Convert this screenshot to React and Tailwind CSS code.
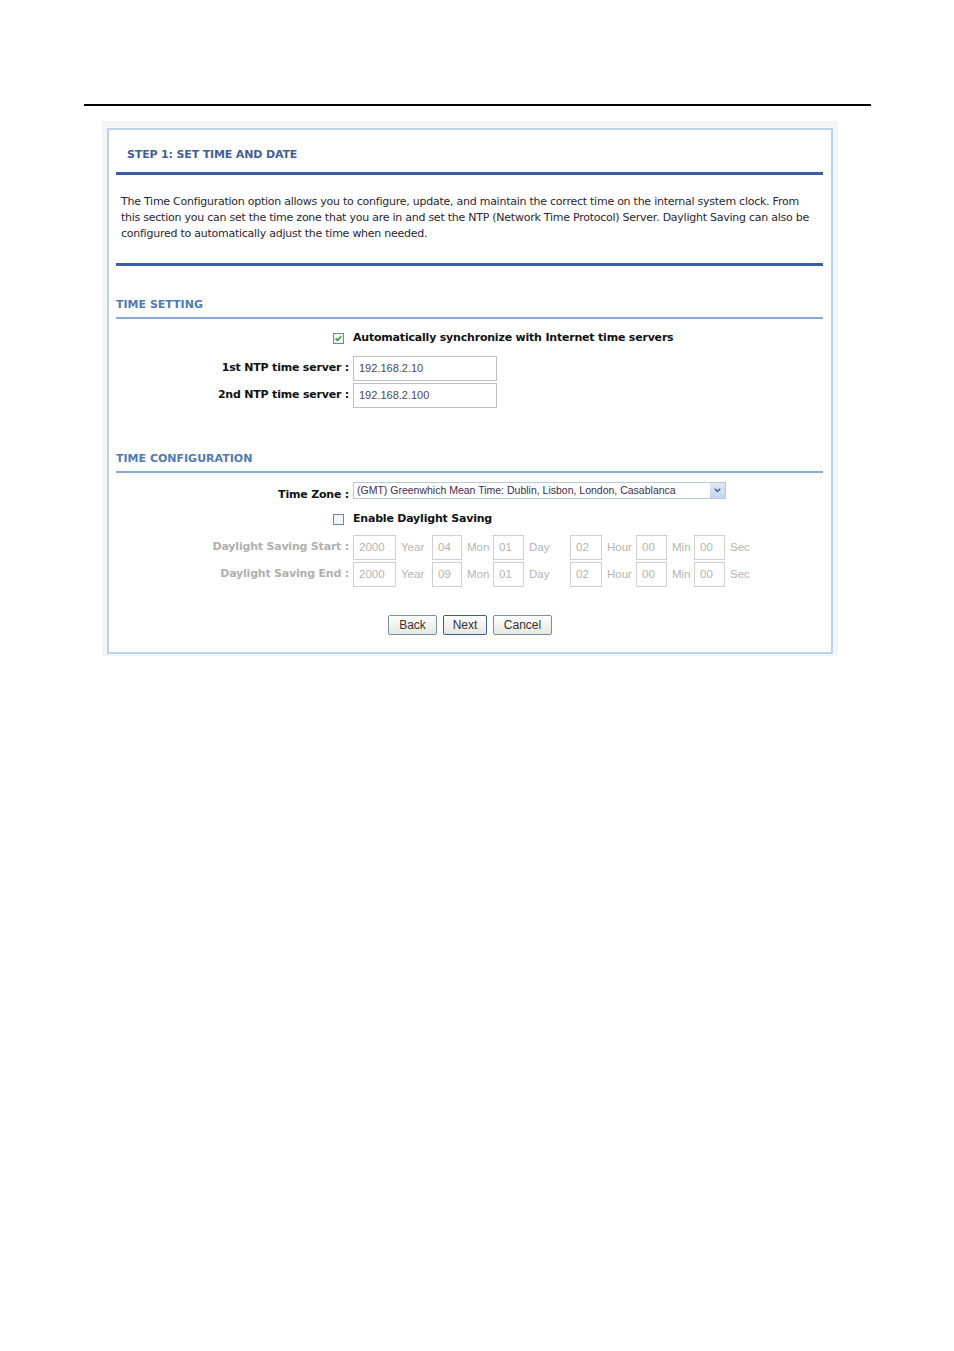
import React from "react";

const tahoma = { fontFamily: '"DejaVu Sans", Verdana, sans-serif' };

function CheckBox({ checked }) {
  return (
    <svg width="11" height="11" viewBox="0 0 11 11" className="shrink-0">
      <rect x="0.5" y="0.5" width="10" height="10" fill="#f4f6f9" stroke="#6b86ad" />
      {checked && <path d="M2.6 5.4 L4.5 7.4 L8.4 3.2" fill="none" stroke="#2e9b3a" strokeWidth="1.6" />}
    </svg>
  );
}

function DInput({ value, w }) {
  return (
    <div
      className="h-[25px] border border-[#cfcfcf] bg-white flex items-center pl-[5px] text-[11.5px] text-[#b4b4b4] font-['Liberation_Sans',Arial,sans-serif]"
      style={{ width: w }}
    >
      {value}
    </div>
  );
}

function DUnit({ children, w }) {
  return (
    <div className="text-[11.5px] text-[#b4b4b4] font-['Liberation_Sans',Arial,sans-serif] pl-[5px]" style={{ width: w }}>
      {children}
    </div>
  );
}

function DSTRow({ label, mon }) {
  return (
    <div className="flex items-center h-[25px]">
      <div className="w-[244px] text-right pr-[4px] text-[11px] font-bold text-[#b0b0b0] tracking-[-0.2px]" style={tahoma}>
        {label}
      </div>
      <DInput value="2000" w={43} />
      <DUnit w={36}>Year</DUnit>
      <DInput value={mon} w={30} />
      <DUnit w={31}>Mon</DUnit>
      <DInput value="01" w={31} />
      <DUnit w={46}>Day</DUnit>
      <DInput value="02" w={32} />
      <DUnit w={34}>Hour</DUnit>
      <DInput value="00" w={31} />
      <DUnit w={27}>Min</DUnit>
      <DInput value="00" w={31} />
      <DUnit w={30}>Sec</DUnit>
    </div>
  );
}

function Btn({ children, w, focus }) {
  return (
    <div
      className={`h-[20px] flex items-center justify-center rounded-[2px] border bg-gradient-to-b from-[#ffffff] to-[#e6e6e0] text-[12px] text-[#333] font-['Liberation_Sans',Arial,sans-serif] ${focus ? "border-[#3a5c9c]" : "border-[#7b8ea9]"}`}
      style={{ width: w }}
    >
      {children}
    </div>
  );
}

export default function App() {
  return (
    <div className="w-[954px] h-[1351px] bg-white relative overflow-hidden">
      <div className="pt-[104px] pl-[84px]">
        <div className="w-[787px] h-[2px] bg-black" />
      </div>
      <div className="ml-[102px] mt-[15px] w-[736px] h-[535px] bg-[#f5f5f5] pl-[5px] pt-[7px]">
        <div className="w-[726px] h-[526px] border-2 border-[#bcd1ea] bg-white" style={tahoma}>
          {/* Title */}
          <div className="pl-[18px] pt-[18px] h-[34px] text-[11px] font-bold text-[#3f5f9c] leading-[14px] tracking-[-0.15px]">
            STEP 1: SET TIME AND DATE
          </div>
          <div className="ml-[7px] mt-[8px] w-[707px] h-[3px] bg-[#3a5da6]" />
          <div className="pl-[12px] pt-[19px] text-[11px] leading-[16px] text-[#2b2535] tracking-[-0.25px] whitespace-nowrap">
            The Time Configuration option allows you to configure, update, and maintain the correct time on the internal system clock. From
            <br />
            this section you can set the time zone that you are in and set the NTP (Network Time Protocol) Server. Daylight Saving can also be
            <br />
            configured to automatically adjust the time when needed.
          </div>
          <div className="ml-[7px] mt-[21px] w-[707px] h-[3px] bg-[#3a5da6]" />

          {/* TIME SETTING */}
          <div className="pl-[7px] mt-[32px] text-[11px] font-bold text-[#4f7ab6] leading-[14px]">TIME SETTING</div>
          <div className="ml-[7px] mt-[5px] w-[707px] h-[2px] bg-[#8aaad6]" />

          <div className="flex items-center mt-[12px] h-[14px]">
            <div className="w-[224px]" />
            <CheckBox checked />
            <div className="pl-[9px] text-[11px] font-bold text-[#111] tracking-[-0.2px]">Automatically synchronize with Internet time servers</div>
          </div>

          <div className="flex items-center mt-[11px] h-[25px]">
            <div className="w-[244px] text-right pr-[4px] text-[11px] font-bold text-[#111] tracking-[-0.2px]">1st NTP time server :</div>
            <div className="w-[144px] h-[25px] border border-[#c0c0c0] flex items-center pl-[5px] text-[11px] text-[#4e4560] font-['Liberation_Sans',Arial,sans-serif]">
              192.168.2.10
            </div>
          </div>
          <div className="flex items-center mt-[2px] h-[25px]">
            <div className="w-[244px] text-right pr-[4px] text-[11px] font-bold text-[#111] tracking-[-0.2px]">2nd NTP time server :</div>
            <div className="w-[144px] h-[25px] border border-[#c0c0c0] flex items-center pl-[5px] text-[11px] text-[#4e4560] font-['Liberation_Sans',Arial,sans-serif]">
              192.168.2.100
            </div>
          </div>

          {/* TIME CONFIGURATION */}
          <div className="pl-[7px] mt-[44px] text-[11px] font-bold text-[#4f7ab6] leading-[14px]">TIME CONFIGURATION</div>
          <div className="ml-[7px] mt-[5px] w-[707px] h-[2px] bg-[#8aaad6]" />

          <div className="flex items-end mt-[10px] h-[19px]">
            <div className="w-[244px] text-right pr-[4px] text-[11px] font-bold text-[#111] leading-[14px] tracking-[-0.2px]">Time Zone :</div>
            <div className="w-[373px] h-[17px] border border-[#b9c8dc] flex items-center justify-between mb-[3px]">
              <span className="pl-[3px] text-[10.5px] text-[#3c2d50] font-['Liberation_Sans',Arial,sans-serif] whitespace-nowrap">
                (GMT) Greenwhich Mean Time: Dublin, Lisbon, London, Casablanca
              </span>
              <div className="w-[15px] h-[15px] bg-gradient-to-b from-[#dfe8f6] to-[#c5d5ee] flex items-center justify-center">
                <svg width="7" height="5" viewBox="0 0 7 5">
                  <path d="M0.8 0.8 L3.5 3.6 L6.2 0.8" fill="none" stroke="#3d5a86" strokeWidth="1.4" />
                </svg>
              </div>
            </div>
          </div>

          <div className="flex items-center mt-[10px] h-[14px]">
            <div className="w-[224px]" />
            <CheckBox />
            <div className="pl-[9px] text-[11px] font-bold text-[#111] tracking-[-0.2px]">Enable Daylight Saving</div>
          </div>

          <div className="mt-[9px]">
            <DSTRow label="Daylight Saving Start :" mon="04" />
          </div>
          <div className="mt-[2px]">
            <DSTRow label="Daylight Saving End :" mon="09" />
          </div>

          <div className="flex mt-[28px] pl-[279px] gap-[6px]">
            <Btn w={49}>Back</Btn>
            <Btn w={44} focus>Next</Btn>
            <Btn w={59}>Cancel</Btn>
          </div>
        </div>
      </div>
    </div>
  );
}
